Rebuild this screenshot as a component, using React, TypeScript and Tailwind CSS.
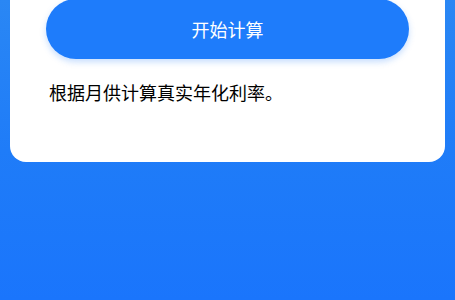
export default function App() {
  return (
    <div
      className="h-[300px] w-[455px] overflow-hidden bg-gradient-to-b from-[#2a87f4] via-[#1f7cf8] to-[#1a75fc] px-[10px]"
      style={{ fontFamily: '"Noto Sans CJK SC", "Noto Sans", sans-serif' }}
    >
      <div className="mt-[-40px] rounded-[16px] bg-white px-[36px] pt-[39px] pb-[58px]">
        <button className="flex h-[60px] w-full items-center justify-center rounded-full bg-[#1e7cfb] text-[18px] text-white shadow-[0_3px_6px_rgba(30,124,251,0.25)]">
          开始计算
        </button>
        <p className="mt-[21px] pl-[3px] text-[18px] leading-[24px] text-black">
          根据月供计算真实年化利率。
        </p>
      </div>
    </div>
  )
}
